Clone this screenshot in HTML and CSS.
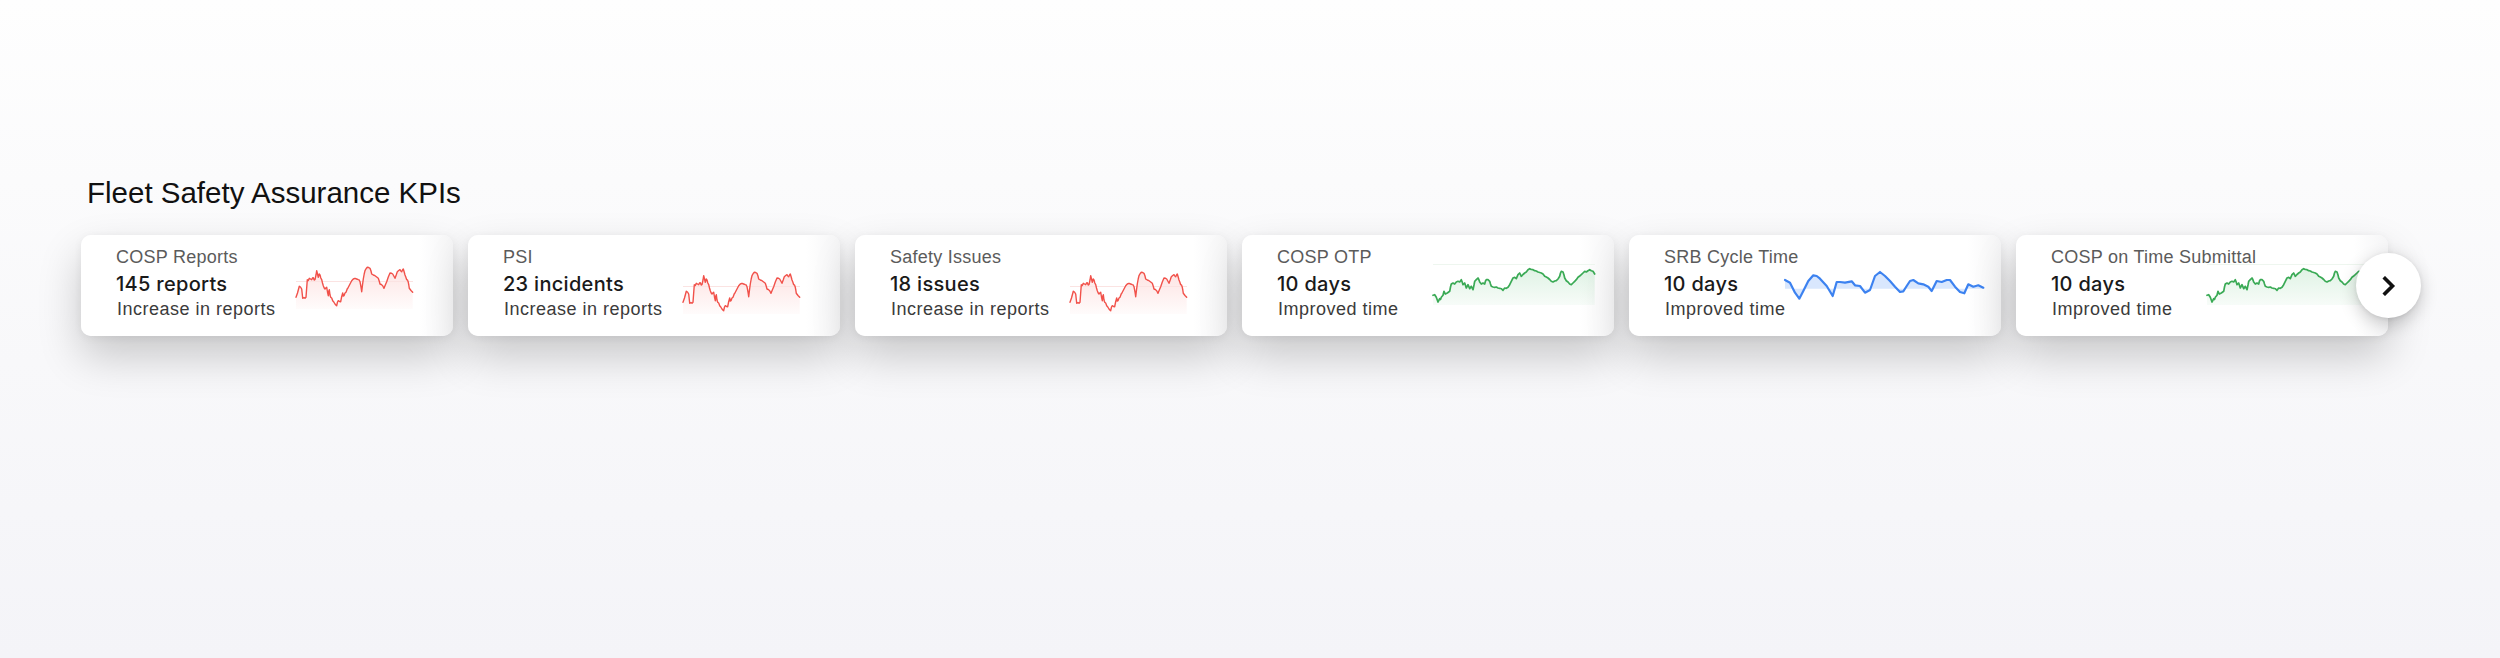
FILE: index.html
```html
<!DOCTYPE html>
<html lang="en">
<head>
<meta charset="utf-8">
<title>Fleet Safety Assurance KPIs</title>
<link rel="stylesheet" href="styles.css">
</head>
<body>
<main class="page">
  <h1 class="title">Fleet Safety Assurance KPIs</h1>
  <div class="carousel">
    <div class="track">
      <article class="kpi kpi--red">
        <div class="kpi-label">COSP Reports</div>
        <div class="kpi-value">145 reports</div>
        <div class="kpi-note">Increase in reports</div>
        <svg class="spark spark--red spark--high" width="118" height="42" viewBox="0 0 118 42">
          <defs><linearGradient id="gr1" x1="0" y1="0" x2="0" y2="1"><stop offset="0" stop-color="#f4524b" stop-opacity="0.16"/><stop offset="1" stop-color="#f4524b" stop-opacity="0.02"/></linearGradient></defs>
          <path class="fill" fill="url(#gr1)" d="M0,42 L0,30.3 1.5,26 3.3,19.3 4.5,20 5.7,22 6.7,31.3 8,30.5 9,31.3 10,30.3 10.6,22 11.3,12.7 12.3,13.5 13.3,11.3 14.5,12 15.7,12.7 16.5,11 17.3,10.7 18.2,13 19,12.7 20,8 20.7,3.7 21.5,7 22.3,10.3 23.2,7 24,8 24.8,11 25.7,12.7 26.5,16 27.3,18.7 28.2,21 29,22 29.8,21 30.7,20.3 31.5,25 32.3,28.7 32.8,24 33.3,22.7 34,28 34.7,30.3 35.7,31 36.7,33.7 37.8,35 39,37 39.8,38 40.7,38.7 41.5,35 42.3,33.7 43.5,34.5 44.7,34.7 45.6,30 46.7,26 47.3,29 48,28.7 49,26 50,25.3 51.2,22 52.3,20.3 54,17 55.7,13.7 57.3,12 59,11.3 60.6,12 62.3,12.7 63.2,13 64,14.7 65,20 65.7,24.7 66.5,18 67.3,12 68.2,7 69,3.7 70.2,1.5 71.3,0.3 72.7,0.5 74,1.3 75,4 75.7,7 77.3,8 79,8.7 80.7,10 82.3,11.3 83.2,14 84,17 85.3,17.5 86.7,18.7 87.3,20 88,21.3 89.3,18 90.7,14.7 92.3,10 94,6 95.3,6.2 96.7,7 97.8,9 99,11.3 100.2,8 101.3,4.7 102.7,3.5 104,2.7 104.8,4 105.7,4.7 106.5,3 107.3,2 108.2,5 109,8 109.8,10 110.7,12.7 111.5,13 112.3,15.3 112.8,18 113.3,21.3 115,23.5 116.7,25.3 L116.7,42 Z"/>
          <line class="ref" x1="0" y1="14.5" x2="117" y2="14.5"/>
          <polyline class="line" points="0,30.3 1.5,26 3.3,19.3 4.5,20 5.7,22 6.7,31.3 8,30.5 9,31.3 10,30.3 10.6,22 11.3,12.7 12.3,13.5 13.3,11.3 14.5,12 15.7,12.7 16.5,11 17.3,10.7 18.2,13 19,12.7 20,8 20.7,3.7 21.5,7 22.3,10.3 23.2,7 24,8 24.8,11 25.7,12.7 26.5,16 27.3,18.7 28.2,21 29,22 29.8,21 30.7,20.3 31.5,25 32.3,28.7 32.8,24 33.3,22.7 34,28 34.7,30.3 35.7,31 36.7,33.7 37.8,35 39,37 39.8,38 40.7,38.7 41.5,35 42.3,33.7 43.5,34.5 44.7,34.7 45.6,30 46.7,26 47.3,29 48,28.7 49,26 50,25.3 51.2,22 52.3,20.3 54,17 55.7,13.7 57.3,12 59,11.3 60.6,12 62.3,12.7 63.2,13 64,14.7 65,20 65.7,24.7 66.5,18 67.3,12 68.2,7 69,3.7 70.2,1.5 71.3,0.3 72.7,0.5 74,1.3 75,4 75.7,7 77.3,8 79,8.7 80.7,10 82.3,11.3 83.2,14 84,17 85.3,17.5 86.7,18.7 87.3,20 88,21.3 89.3,18 90.7,14.7 92.3,10 94,6 95.3,6.2 96.7,7 97.8,9 99,11.3 100.2,8 101.3,4.7 102.7,3.5 104,2.7 104.8,4 105.7,4.7 106.5,3 107.3,2 108.2,5 109,8 109.8,10 110.7,12.7 111.5,13 112.3,15.3 112.8,18 113.3,21.3 115,23.5 116.7,25.3"/>
        </svg>
      </article>

      <article class="kpi kpi--red">
        <div class="kpi-label">PSI</div>
        <div class="kpi-value">23 incidents</div>
        <div class="kpi-note">Increase in reports</div>
        <svg class="spark spark--red" width="118" height="42" viewBox="0 0 118 42">
          <defs><linearGradient id="gr2" x1="0" y1="0" x2="0" y2="1"><stop offset="0" stop-color="#f4524b" stop-opacity="0.16"/><stop offset="1" stop-color="#f4524b" stop-opacity="0.02"/></linearGradient></defs>
          <path class="fill" fill="url(#gr2)" d="M0,42 L0,30.3 1.5,26 3.3,19.3 4.5,20 5.7,22 6.7,31.3 8,30.5 9,31.3 10,30.3 10.6,22 11.3,12.7 12.3,13.5 13.3,11.3 14.5,12 15.7,12.7 16.5,11 17.3,10.7 18.2,13 19,12.7 20,8 20.7,3.7 21.5,7 22.3,10.3 23.2,7 24,8 24.8,11 25.7,12.7 26.5,16 27.3,18.7 28.2,21 29,22 29.8,21 30.7,20.3 31.5,25 32.3,28.7 32.8,24 33.3,22.7 34,28 34.7,30.3 35.7,31 36.7,33.7 37.8,35 39,37 39.8,38 40.7,38.7 41.5,35 42.3,33.7 43.5,34.5 44.7,34.7 45.6,30 46.7,26 47.3,29 48,28.7 49,26 50,25.3 51.2,22 52.3,20.3 54,17 55.7,13.7 57.3,12 59,11.3 60.6,12 62.3,12.7 63.2,13 64,14.7 65,20 65.7,24.7 66.5,18 67.3,12 68.2,7 69,3.7 70.2,1.5 71.3,0.3 72.7,0.5 74,1.3 75,4 75.7,7 77.3,8 79,8.7 80.7,10 82.3,11.3 83.2,14 84,17 85.3,17.5 86.7,18.7 87.3,20 88,21.3 89.3,18 90.7,14.7 92.3,10 94,6 95.3,6.2 96.7,7 97.8,9 99,11.3 100.2,8 101.3,4.7 102.7,3.5 104,2.7 104.8,4 105.7,4.7 106.5,3 107.3,2 108.2,5 109,8 109.8,10 110.7,12.7 111.5,13 112.3,15.3 112.8,18 113.3,21.3 115,23.5 116.7,25.3 L116.7,42 Z"/>
          <line class="ref" x1="0" y1="14.5" x2="117" y2="14.5"/>
          <polyline class="line" points="0,30.3 1.5,26 3.3,19.3 4.5,20 5.7,22 6.7,31.3 8,30.5 9,31.3 10,30.3 10.6,22 11.3,12.7 12.3,13.5 13.3,11.3 14.5,12 15.7,12.7 16.5,11 17.3,10.7 18.2,13 19,12.7 20,8 20.7,3.7 21.5,7 22.3,10.3 23.2,7 24,8 24.8,11 25.7,12.7 26.5,16 27.3,18.7 28.2,21 29,22 29.8,21 30.7,20.3 31.5,25 32.3,28.7 32.8,24 33.3,22.7 34,28 34.7,30.3 35.7,31 36.7,33.7 37.8,35 39,37 39.8,38 40.7,38.7 41.5,35 42.3,33.7 43.5,34.5 44.7,34.7 45.6,30 46.7,26 47.3,29 48,28.7 49,26 50,25.3 51.2,22 52.3,20.3 54,17 55.7,13.7 57.3,12 59,11.3 60.6,12 62.3,12.7 63.2,13 64,14.7 65,20 65.7,24.7 66.5,18 67.3,12 68.2,7 69,3.7 70.2,1.5 71.3,0.3 72.7,0.5 74,1.3 75,4 75.7,7 77.3,8 79,8.7 80.7,10 82.3,11.3 83.2,14 84,17 85.3,17.5 86.7,18.7 87.3,20 88,21.3 89.3,18 90.7,14.7 92.3,10 94,6 95.3,6.2 96.7,7 97.8,9 99,11.3 100.2,8 101.3,4.7 102.7,3.5 104,2.7 104.8,4 105.7,4.7 106.5,3 107.3,2 108.2,5 109,8 109.8,10 110.7,12.7 111.5,13 112.3,15.3 112.8,18 113.3,21.3 115,23.5 116.7,25.3"/>
        </svg>
      </article>

      <article class="kpi kpi--red">
        <div class="kpi-label">Safety Issues</div>
        <div class="kpi-value">18 issues</div>
        <div class="kpi-note">Increase in reports</div>
        <svg class="spark spark--red" width="118" height="42" viewBox="0 0 118 42">
          <defs><linearGradient id="gr3" x1="0" y1="0" x2="0" y2="1"><stop offset="0" stop-color="#f4524b" stop-opacity="0.16"/><stop offset="1" stop-color="#f4524b" stop-opacity="0.02"/></linearGradient></defs>
          <path class="fill" fill="url(#gr3)" d="M0,42 L0,30.3 1.5,26 3.3,19.3 4.5,20 5.7,22 6.7,31.3 8,30.5 9,31.3 10,30.3 10.6,22 11.3,12.7 12.3,13.5 13.3,11.3 14.5,12 15.7,12.7 16.5,11 17.3,10.7 18.2,13 19,12.7 20,8 20.7,3.7 21.5,7 22.3,10.3 23.2,7 24,8 24.8,11 25.7,12.7 26.5,16 27.3,18.7 28.2,21 29,22 29.8,21 30.7,20.3 31.5,25 32.3,28.7 32.8,24 33.3,22.7 34,28 34.7,30.3 35.7,31 36.7,33.7 37.8,35 39,37 39.8,38 40.7,38.7 41.5,35 42.3,33.7 43.5,34.5 44.7,34.7 45.6,30 46.7,26 47.3,29 48,28.7 49,26 50,25.3 51.2,22 52.3,20.3 54,17 55.7,13.7 57.3,12 59,11.3 60.6,12 62.3,12.7 63.2,13 64,14.7 65,20 65.7,24.7 66.5,18 67.3,12 68.2,7 69,3.7 70.2,1.5 71.3,0.3 72.7,0.5 74,1.3 75,4 75.7,7 77.3,8 79,8.7 80.7,10 82.3,11.3 83.2,14 84,17 85.3,17.5 86.7,18.7 87.3,20 88,21.3 89.3,18 90.7,14.7 92.3,10 94,6 95.3,6.2 96.7,7 97.8,9 99,11.3 100.2,8 101.3,4.7 102.7,3.5 104,2.7 104.8,4 105.7,4.7 106.5,3 107.3,2 108.2,5 109,8 109.8,10 110.7,12.7 111.5,13 112.3,15.3 112.8,18 113.3,21.3 115,23.5 116.7,25.3 L116.7,42 Z"/>
          <line class="ref" x1="0" y1="14.5" x2="117" y2="14.5"/>
          <polyline class="line" points="0,30.3 1.5,26 3.3,19.3 4.5,20 5.7,22 6.7,31.3 8,30.5 9,31.3 10,30.3 10.6,22 11.3,12.7 12.3,13.5 13.3,11.3 14.5,12 15.7,12.7 16.5,11 17.3,10.7 18.2,13 19,12.7 20,8 20.7,3.7 21.5,7 22.3,10.3 23.2,7 24,8 24.8,11 25.7,12.7 26.5,16 27.3,18.7 28.2,21 29,22 29.8,21 30.7,20.3 31.5,25 32.3,28.7 32.8,24 33.3,22.7 34,28 34.7,30.3 35.7,31 36.7,33.7 37.8,35 39,37 39.8,38 40.7,38.7 41.5,35 42.3,33.7 43.5,34.5 44.7,34.7 45.6,30 46.7,26 47.3,29 48,28.7 49,26 50,25.3 51.2,22 52.3,20.3 54,17 55.7,13.7 57.3,12 59,11.3 60.6,12 62.3,12.7 63.2,13 64,14.7 65,20 65.7,24.7 66.5,18 67.3,12 68.2,7 69,3.7 70.2,1.5 71.3,0.3 72.7,0.5 74,1.3 75,4 75.7,7 77.3,8 79,8.7 80.7,10 82.3,11.3 83.2,14 84,17 85.3,17.5 86.7,18.7 87.3,20 88,21.3 89.3,18 90.7,14.7 92.3,10 94,6 95.3,6.2 96.7,7 97.8,9 99,11.3 100.2,8 101.3,4.7 102.7,3.5 104,2.7 104.8,4 105.7,4.7 106.5,3 107.3,2 108.2,5 109,8 109.8,10 110.7,12.7 111.5,13 112.3,15.3 112.8,18 113.3,21.3 115,23.5 116.7,25.3"/>
        </svg>
      </article>

      <article class="kpi kpi--green">
        <div class="kpi-label">COSP OTP</div>
        <div class="kpi-value">10 days</div>
        <div class="kpi-note">Improved time</div>
        <svg class="spark spark--green" width="163" height="42" viewBox="0 0 163 42">
          <defs><linearGradient id="gr4" x1="0" y1="0" x2="0" y2="1"><stop offset="0" stop-color="#3bb25a" stop-opacity="0.16"/><stop offset="1" stop-color="#3bb25a" stop-opacity="0.04"/></linearGradient></defs>
          <line class="ref" x1="0" y1="1.5" x2="162" y2="1.5"/>
          <path class="fill" fill="url(#gr4)" d="M0,42 L0,32.3 1.7,31.7 3.3,34.3 5,39 6.7,35.7 7.5,36.5 8.3,34.3 10,32.3 11,28.3 12.3,31 14.3,30 16.7,28.3 17.5,24 18.3,21 20,20 21.7,21 23.3,19 25,18.3 26.7,19 28.3,16.7 29.2,19 30,21.7 31.7,20 33.3,25 35,21.7 36.7,25.7 38.3,23.3 40,26.7 41,22 41.7,18.3 43.3,16.7 45,15 46,17 46.7,19 48.3,21 50,20 51.7,21 52.5,18 53.3,16.7 55,16.7 56.7,18.3 57.5,21 58.3,23.3 60,24 61.7,24.3 63.3,24 65,25 66.7,25.3 68.3,25.7 70,27.3 71.7,25 73.3,25.3 75,24.3 76.7,21.7 78.3,18.3 80,15 81.7,14.3 83.3,15.7 85,11.7 86.7,10 88.3,13.3 90,11.5 91.7,10 93.3,9 95,6.7 96.7,5.7 98.3,6.5 100,6.7 101.7,7.7 103.3,8 105,9 106.7,9.5 108.3,10 110,11 111.7,13.3 113.3,14 115,15 116.7,16.5 118.3,18.3 120,19 121.7,18 123.3,17.7 125,16 126.7,13.3 127.5,10 128.3,8.3 130,9 131,12 131.7,15 133.3,17.7 135,19 136.7,21 138.3,21.7 140,20 141.7,18.3 143.3,16.7 145,14.3 146.7,13 148.3,11.7 150,10 151.7,8.3 153.3,9 155,7.7 156.7,6.7 158.3,7.7 160,8.3 161.7,11 L161.7,42 Z"/>
          <polyline class="line" points="0,32.3 1.7,31.7 3.3,34.3 5,39 6.7,35.7 7.5,36.5 8.3,34.3 10,32.3 11,28.3 12.3,31 14.3,30 16.7,28.3 17.5,24 18.3,21 20,20 21.7,21 23.3,19 25,18.3 26.7,19 28.3,16.7 29.2,19 30,21.7 31.7,20 33.3,25 35,21.7 36.7,25.7 38.3,23.3 40,26.7 41,22 41.7,18.3 43.3,16.7 45,15 46,17 46.7,19 48.3,21 50,20 51.7,21 52.5,18 53.3,16.7 55,16.7 56.7,18.3 57.5,21 58.3,23.3 60,24 61.7,24.3 63.3,24 65,25 66.7,25.3 68.3,25.7 70,27.3 71.7,25 73.3,25.3 75,24.3 76.7,21.7 78.3,18.3 80,15 81.7,14.3 83.3,15.7 85,11.7 86.7,10 88.3,13.3 90,11.5 91.7,10 93.3,9 95,6.7 96.7,5.7 98.3,6.5 100,6.7 101.7,7.7 103.3,8 105,9 106.7,9.5 108.3,10 110,11 111.7,13.3 113.3,14 115,15 116.7,16.5 118.3,18.3 120,19 121.7,18 123.3,17.7 125,16 126.7,13.3 127.5,10 128.3,8.3 130,9 131,12 131.7,15 133.3,17.7 135,19 136.7,21 138.3,21.7 140,20 141.7,18.3 143.3,16.7 145,14.3 146.7,13 148.3,11.7 150,10 151.7,8.3 153.3,9 155,7.7 156.7,6.7 158.3,7.7 160,8.3 161.7,11"/>
        </svg>
      </article>

      <article class="kpi kpi--blue">
        <div class="kpi-label">SRB Cycle Time</div>
        <div class="kpi-value">10 days</div>
        <div class="kpi-note">Improved time</div>
        <svg class="spark spark--blue" width="200" height="36" viewBox="0 0 200 36">
          <path class="fill" d="M0,22.7 L0,14 5,16.7 10,26.7 14.3,32.7 18.3,25 23.3,15 28.3,9.3 31.7,10 35,12.7 41.7,20 47.7,30 51.7,16 55,16 60,16.7 66.7,15.3 70,19.3 75,20 80,26.7 85,24 90,10 95,6 100,10 105,15 110,20.7 115,26 118.3,25.3 121.7,20 125,15 128.3,14 133.3,17.3 138.3,18.3 143.3,20.7 146.7,25 151.7,15 156.7,16 161.7,14 165,14 170,20.7 175,26 179.3,27.3 183.3,18.3 188.3,20.7 193.3,19.3 198.3,21.7 L198.3,22.7 Z"/>
          <polyline class="line" points="0,14 5,16.7 10,26.7 14.3,32.7 18.3,25 23.3,15 28.3,9.3 31.7,10 35,12.7 41.7,20 47.7,30 51.7,16 55,16 60,16.7 66.7,15.3 70,19.3 75,20 80,26.7 85,24 90,10 95,6 100,10 105,15 110,20.7 115,26 118.3,25.3 121.7,20 125,15 128.3,14 133.3,17.3 138.3,18.3 143.3,20.7 146.7,25 151.7,15 156.7,16 161.7,14 165,14 170,20.7 175,26 179.3,27.3 183.3,18.3 188.3,20.7 193.3,19.3 198.3,21.7"/>
        </svg>
      </article>

      <article class="kpi kpi--green">
        <div class="kpi-label">COSP on Time Submittal</div>
        <div class="kpi-value">10 days</div>
        <div class="kpi-note">Improved time</div>
        <svg class="spark spark--green" width="163" height="42" viewBox="0 0 163 42">
          <defs><linearGradient id="gr6" x1="0" y1="0" x2="0" y2="1"><stop offset="0" stop-color="#3bb25a" stop-opacity="0.16"/><stop offset="1" stop-color="#3bb25a" stop-opacity="0.04"/></linearGradient></defs>
          <line class="ref" x1="0" y1="1.5" x2="162" y2="1.5"/>
          <path class="fill" fill="url(#gr6)" d="M0,42 L0,32.3 1.7,31.7 3.3,34.3 5,39 6.7,35.7 7.5,36.5 8.3,34.3 10,32.3 11,28.3 12.3,31 14.3,30 16.7,28.3 17.5,24 18.3,21 20,20 21.7,21 23.3,19 25,18.3 26.7,19 28.3,16.7 29.2,19 30,21.7 31.7,20 33.3,25 35,21.7 36.7,25.7 38.3,23.3 40,26.7 41,22 41.7,18.3 43.3,16.7 45,15 46,17 46.7,19 48.3,21 50,20 51.7,21 52.5,18 53.3,16.7 55,16.7 56.7,18.3 57.5,21 58.3,23.3 60,24 61.7,24.3 63.3,24 65,25 66.7,25.3 68.3,25.7 70,27.3 71.7,25 73.3,25.3 75,24.3 76.7,21.7 78.3,18.3 80,15 81.7,14.3 83.3,15.7 85,11.7 86.7,10 88.3,13.3 90,11.5 91.7,10 93.3,9 95,6.7 96.7,5.7 98.3,6.5 100,6.7 101.7,7.7 103.3,8 105,9 106.7,9.5 108.3,10 110,11 111.7,13.3 113.3,14 115,15 116.7,16.5 118.3,18.3 120,19 121.7,18 123.3,17.7 125,16 126.7,13.3 127.5,10 128.3,8.3 130,9 131,12 131.7,15 133.3,17.7 135,19 136.7,21 138.3,21.7 140,20 141.7,18.3 143.3,16.7 145,14.3 146.7,13 148.3,11.7 150,10 151.7,8.3 153.3,9 155,7.7 156.7,6.7 158.3,7.7 160,8.3 161.7,11 L161.7,42 Z"/>
          <polyline class="line" points="0,32.3 1.7,31.7 3.3,34.3 5,39 6.7,35.7 7.5,36.5 8.3,34.3 10,32.3 11,28.3 12.3,31 14.3,30 16.7,28.3 17.5,24 18.3,21 20,20 21.7,21 23.3,19 25,18.3 26.7,19 28.3,16.7 29.2,19 30,21.7 31.7,20 33.3,25 35,21.7 36.7,25.7 38.3,23.3 40,26.7 41,22 41.7,18.3 43.3,16.7 45,15 46,17 46.7,19 48.3,21 50,20 51.7,21 52.5,18 53.3,16.7 55,16.7 56.7,18.3 57.5,21 58.3,23.3 60,24 61.7,24.3 63.3,24 65,25 66.7,25.3 68.3,25.7 70,27.3 71.7,25 73.3,25.3 75,24.3 76.7,21.7 78.3,18.3 80,15 81.7,14.3 83.3,15.7 85,11.7 86.7,10 88.3,13.3 90,11.5 91.7,10 93.3,9 95,6.7 96.7,5.7 98.3,6.5 100,6.7 101.7,7.7 103.3,8 105,9 106.7,9.5 108.3,10 110,11 111.7,13.3 113.3,14 115,15 116.7,16.5 118.3,18.3 120,19 121.7,18 123.3,17.7 125,16 126.7,13.3 127.5,10 128.3,8.3 130,9 131,12 131.7,15 133.3,17.7 135,19 136.7,21 138.3,21.7 140,20 141.7,18.3 143.3,16.7 145,14.3 146.7,13 148.3,11.7 150,10 151.7,8.3 153.3,9 155,7.7 156.7,6.7 158.3,7.7 160,8.3 161.7,11"/>
        </svg>
      </article>
    </div>
    <button class="next" type="button" aria-label="Next">
      <svg width="14" height="20" viewBox="0 0 14 20"><path d="M3 2.5 L10.5 10 L3 17.5"/></svg>
    </button>
  </div>
</main>
</body>
</html>
```

FILE: styles.css
```css
html, body {
  margin: 0;
  padding: 0;
}

body {
  width: 2500px;
  height: 658px;
  overflow: hidden;
  background: linear-gradient(180deg, #fefefe 0%, #f8f8fa 55%, #f4f4f8 100%);
  font-family: "Liberation Sans", Arial, sans-serif;
  color: #1c1c1c;
}

.page {
  padding: 176px 0 0 81px;
}

.title {
  margin: 0 0 25px 6px;
  font-size: 29.5px;
  line-height: 34px;
  font-weight: 400;
  color: #111;
}

.carousel {
  position: relative;
  width: max-content;
}

.track {
  display: flex;
  gap: 15px;
}

.kpi {
  box-sizing: border-box;
  width: 372px;
  height: 101px;
  padding: 11px 0 16px 35px;
  border-radius: 10px;
  background: linear-gradient(90deg, #ffffff calc(100% - 34px), #f5f5f6 100%);
  box-shadow: 0 20px 44px rgba(0, 0, 0, 0.2), 0 2px 8px rgba(0, 0, 0, 0.06);
  display: grid;
  grid-template-rows: auto auto auto;
  align-content: start;
  overflow: hidden;
}

.kpi--red { grid-template-columns: 180px auto; }
.kpi--green { grid-template-columns: 156px auto; }
.kpi--blue { grid-template-columns: 121px auto; }

.kpi-label,
.kpi-value,
.kpi-note {
  grid-column: 1;
  white-space: nowrap;
}

.kpi-label {
  grid-row: 1;
  font-size: 18px;
  line-height: 22px;
  color: #5b5b5b;
  letter-spacing: 0.25px;
}

.kpi-value {
  grid-row: 2;
  margin-top: 4px;
  font-family: Inter, "Liberation Sans", sans-serif;
  font-size: 20px;
  line-height: 24px;
  font-weight: 500;
  color: #1a1a1a;
  letter-spacing: 0.3px;
}

.kpi-note {
  grid-row: 3;
  margin-top: 2px;
  margin-left: 1px;
  font-size: 18px;
  line-height: 22px;
  color: #3b3b3b;
  letter-spacing: 0.5px;
}

.spark {
  grid-column: 2;
  grid-row: 1 / 4;
  align-self: start;
  display: block;
  overflow: visible;
}

.spark .line {
  fill: none;
  stroke-linejoin: round;
  stroke-linecap: round;
}

.spark .ref {
  stroke-width: 1;
}

.spark--red { margin-top: 26px; }
.spark--red.spark--high { margin-top: 21px; }
.spark--red .line { stroke: #f1514a; stroke-width: 1.4; }
.spark--red .ref { stroke: #fbe3e2; }

.spark--green { margin-top: 17px; }
.spark--green .line { stroke: #3aaa55; stroke-width: 1.7; }
.spark--green .ref { stroke: #eef6ef; }

.spark--blue { margin-top: 20px; }
.spark--blue .line { stroke: #3c82f0; stroke-width: 2.2; }
.spark--blue .fill { fill: rgba(66, 133, 244, 0.2); }

.next {
  position: absolute;
  right: -33px;
  top: 18px;
  width: 65px;
  height: 65px;
  padding: 0;
  border: none;
  border-radius: 50%;
  background: #ffffff;
  box-shadow: 0 6px 18px rgba(0, 0, 0, 0.2), 0 1px 4px rgba(0, 0, 0, 0.08);
  display: flex;
  align-items: center;
  justify-content: center;
  cursor: pointer;
}

.next svg path {
  fill: none;
  stroke: #111;
  stroke-width: 3.6;
  stroke-linecap: square;
  stroke-linejoin: miter;
}
```
